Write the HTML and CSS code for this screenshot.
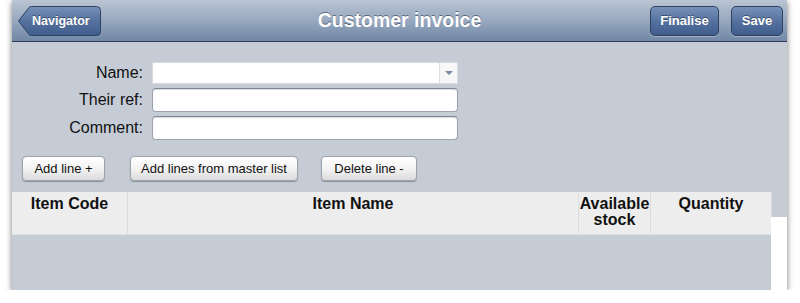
FILE: index.html
```html
<!DOCTYPE html>
<html lang="en">
<head>
  <meta charset="UTF-8">
  <title>Customer invoice</title>
  <link rel="stylesheet" href="styles.css">
</head>
<body>
  <div class="window">
    <div class="toolbar">
      <div class="left">
        <button class="back">
          <svg class="back-shape" width="83" height="30" viewBox="0 0 83 30">
            <defs>
              <linearGradient id="bg" x1="0" y1="0" x2="0" y2="1">
                <stop offset="0" stop-color="#7690b8"/>
                <stop offset="0.5" stop-color="#56729f"/>
                <stop offset="1" stop-color="#3f5d8c"/>
              </linearGradient>
            </defs>
            <path d="M0.5 15 L11 1.5 Q12 0.5 13.5 0.5 L78.5 0.5 Q82.5 0.5 82.5 4.5 L82.5 25.5 Q82.5 29.5 78.5 29.5 L13.5 29.5 Q12 29.5 11 28.5 Z" fill="url(#bg)" stroke="#2e4261"/>
          </svg>
          <span>Navigator</span>
        </button>
      </div>
      <h1>Customer invoice</h1>
      <div class="right">
        <button class="tb-btn finalise">Finalise</button>
        <button class="tb-btn save">Save</button>
      </div>
    </div>

    <div class="form">
      <label>Name:</label>
      <div class="select"><span class="arrow"></span></div>
      <label>Their ref:</label>
      <input class="field" type="text">
      <label>Comment:</label>
      <input class="field" type="text">
    </div>

    <div class="actions">
      <button class="btn add">Add line +</button>
      <button class="btn master">Add lines from master list</button>
      <button class="btn del">Delete line -</button>
    </div>

    <div class="table">
      <div class="thead">
        <div class="th code">Item Code</div>
        <div class="th name">Item Name</div>
        <div class="th stock">Available stock</div>
        <div class="th qty">Quantity</div>
        <div class="scroll-top"></div>
      </div>
      <div class="tbody">
        <div class="rows"></div>
        <div class="scroll-track"></div>
      </div>
    </div>
  </div>
</body>
</html>
```

FILE: styles.css
```css
body {
  margin: 0;
  background: #fff;
  font-family: "Liberation Sans", Arial, sans-serif;
  color: #111;
}

.window {
  margin-left: 12px;
  width: 775px;
  height: 290px;
  background: #c5ccd5;
  box-shadow: 0 2px 6px rgba(0, 0, 0, 0.55);
  display: flex;
  flex-direction: column;
  overflow: hidden;
}

.toolbar {
  height: 41px;
  flex-shrink: 0;
  display: grid;
  grid-template-columns: 1fr auto 1fr;
  align-items: center;
  background: linear-gradient(to bottom, #bac4d3 0%, #98a8bf 50%, #7087a6 100%);
  border-bottom: 1px solid #2f3c4e;
}

.toolbar h1 {
  margin: 0;
  font-size: 19.5px;
  font-weight: bold;
  color: #fff;
  text-shadow: 0 -1px 0 rgba(40, 55, 80, 0.6);
}

.left {
  padding-left: 6px;
  display: flex;
}

.right {
  display: flex;
  justify-content: flex-end;
  gap: 12px;
  padding-right: 4px;
}

.back {
  position: relative;
  width: 83px;
  height: 30px;
  padding: 0 0 0 14px;
  border: none;
  background: none;
  font-family: inherit;
  font-size: 12.5px;
  font-weight: bold;
  color: #fff;
  text-shadow: 0 -1px 0 rgba(0, 0, 0, 0.4);
  text-align: left;
}

.back-shape {
  position: absolute;
  left: 0;
  top: 0;
}

.back span {
  position: relative;
}

.tb-btn {
  height: 30px;
  padding: 0 8px;
  border: 1px solid #2e4261;
  border-radius: 5px;
  background: linear-gradient(to bottom, #7690b8 0%, #56729f 50%, #3f5d8c 100%);
  font-family: inherit;
  font-size: 13px;
  font-weight: bold;
  color: #fff;
  text-shadow: 0 -1px 0 rgba(0, 0, 0, 0.4);
  box-shadow: 0 1px 0 rgba(255, 255, 255, 0.3);
}

.finalise {
  width: 69px;
}

.save {
  width: 52px;
}

.form {
  display: grid;
  grid-template-columns: 131px 306px;
  column-gap: 9px;
  row-gap: 4px;
  padding-top: 20px;
  align-items: center;
}

.form label {
  text-align: right;
  font-size: 16px;
  color: #111;
}

.select {
  height: 22px;
  background: #fff;
  border: 1px solid #d6dbe1;
  box-sizing: border-box;
  position: relative;
}

.arrow {
  position: absolute;
  right: 0;
  top: 0;
  width: 17px;
  height: 20px;
  border-left: 1px solid #dde0e4;
  background: #f7f7f7;
}

.arrow::after {
  content: "";
  position: absolute;
  left: 5px;
  top: 8px;
  border-left: 4px solid transparent;
  border-right: 4px solid transparent;
  border-top: 4px solid #7b8ca6;
}

.field {
  height: 24px;
  box-sizing: border-box;
  margin: 0;
  border: 1px solid #9aa3ae;
  border-top-color: #7d8693;
  border-radius: 4px;
  background: #fff;
  box-shadow: inset 0 1px 1px rgba(0, 0, 0, 0.15);
}

.actions {
  display: flex;
  padding: 16px 0 0 10px;
  height: 25px;
}

.btn {
  height: 25px;
  border: 1px solid #9ea4ac;
  border-radius: 4px;
  background: linear-gradient(to bottom, #ffffff 0%, #f3f3f3 50%, #dcdcdc 100%);
  font-family: inherit;
  font-size: 13px;
  color: #111;
  box-shadow: 0 1px 1px rgba(0, 0, 0, 0.3);
  padding: 0;
}

.add {
  width: 83px;
}

.master {
  width: 168px;
  margin-left: 25px;
}

.del {
  width: 96px;
  margin-left: 23px;
}

.table {
  margin-top: 11px;
  flex: 1;
  display: flex;
  flex-direction: column;
}

.thead {
  display: grid;
  grid-template-columns: 115px 451px 72px 121px 16px;
  height: 42px;
  background: #ededed;
  border-bottom: 1px solid #dcdfe3;
}

.th {
  font-size: 16px;
  font-weight: bold;
  text-align: center;
  line-height: 16px;
  padding-top: 4px;
  border-left: 1px solid #dcdcdc;
}

.th.code {
  border-left: none;
}

.scroll-top {
  background: #c5ccd5;
  height: 25px;
  border-left: 1px solid #dcdcdc;
}

.tbody {
  flex: 1;
  display: flex;
}

.rows {
  flex: 1;
}

.scroll-track {
  width: 16px;
  background: #fff;
  margin-top: -18px;
}
```
